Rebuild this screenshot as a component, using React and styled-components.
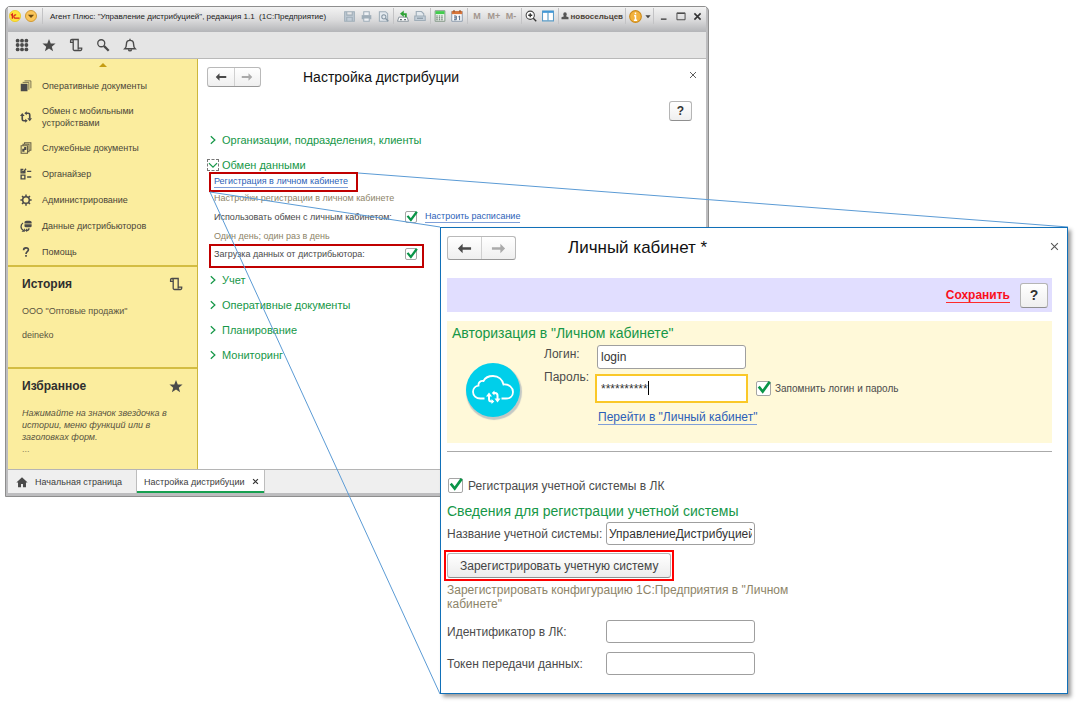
import React, { useLayoutEffect, useRef, useState } from 'react';
import styled, { createGlobalStyle } from 'styled-components';

const NAV_ITEMS = [
  { icon: 'docs', text: 'Оперативные документы' },
  { icon: 'sync', text: 'Обмен с мобильными устройствами', tall: true },
  { icon: 'service', text: 'Служебные документы' },
  { icon: 'organizer', text: 'Органайзер' },
  { icon: 'gear', text: 'Администрирование' },
  { icon: 'database', text: 'Данные дистрибьюторов' },
  { icon: 'help', text: 'Помощь' },
];

const CLOSED_GROUPS = ['Учет', 'Оперативные документы', 'Планирование', 'Мониторинг'];

const App = () => {
  const desktopRef = useRef(null);
  const frameRef = useRef(null);
  const dialogRef = useRef(null);
  const [lines, setLines] = useState([]);

  useLayoutEffect(() => {
    // the connectors run from the framed link to the corners of the dialog
    function measure() {
      const base = desktopRef.current.getBoundingClientRect();
      const from = frameRef.current.getBoundingClientRect();
      const to = dialogRef.current.getBoundingClientRect();
      const points = [
        [from.right, from.top + 1, to.right, to.top],
        [from.left + 1, from.bottom, to.left, to.top],
        [from.left + 1, from.bottom, to.left, to.bottom],
      ];
      setLines(points.map(([x1, y1, x2, y2]) => ({
        x1: x1 - base.left,
        y1: y1 - base.top,
        x2: x2 - base.left,
        y2: y2 - base.top,
      })));
    }
    measure();
    window.addEventListener('resize', measure);
    return () => window.removeEventListener('resize', measure);
  }, []);

  return (
    <Desktop ref={desktopRef}>
      <GlobalStyle />
      <MainWindow frameRef={frameRef} />
      <Connectors aria-hidden="true">
        {lines.map((line, index) => (
          <line key={index} {...line} stroke="#5b9bd5" />
        ))}
      </Connectors>
      <AccountDialog dialogRef={dialogRef} />
    </Desktop>
  );
};

const MainWindow = ({ frameRef }) => (
  <WindowFrame>
    <TitleBar>
      <Icon name="logo" size={12} />
      <RoundArrow type="button" aria-label="Главное меню">
        <Icon name="triangle" size={10} />
      </RoundArrow>
      <BarLine />
      <WindowTitle>Агент Плюс: "Управление дистрибуцией", редакция 1.1&nbsp; (1С:Предприятие)</WindowTitle>
      <TitleTools>
        <TitleButton aria-label="Сохранить"><Icon name="save" size={11} /></TitleButton>
        <TitleButton aria-label="Печать"><Icon name="print" size={11} /></TitleButton>
        <TitleButton aria-label="Просмотр"><Icon name="preview" size={11} /></TitleButton>
        <BarLine />
        <TitleButton aria-label="Получить ссылку"><Icon name="linkOut" size={12} /></TitleButton>
        <TitleButton aria-label="Перейти по ссылке"><Icon name="linkIn" size={12} /></TitleButton>
        <BarLine />
        <TitleButton aria-label="Калькулятор"><Icon name="calc" size={12} /></TitleButton>
        <TitleButton aria-label="Календарь"><Icon name="calendar" size={12} /></TitleButton>
        <BarLine />
        <TitleButton>M</TitleButton>
        <TitleButton>M+</TitleButton>
        <TitleButton>M-</TitleButton>
        <BarLine />
        <TitleButton aria-label="Масштаб"><Icon name="zoomIn" size={12} /></TitleButton>
        <TitleButton aria-label="Панели"><Icon name="panes" size={12} /></TitleButton>
        <BarLine />
        <User><Icon name="user" size={8} />новосельцев</User>
        <BarLine />
        <TitleButton aria-label="Информация"><Icon name="info" size={13} /></TitleButton>
        <TitleButton $narrow aria-label="Еще"><Icon name="caret" size={6} /></TitleButton>
        <BarLine />
        <TitleButton aria-label="Свернуть"><Icon name="minimize" size={10} /></TitleButton>
        <TitleButton aria-label="Развернуть"><Icon name="maximize" size={10} /></TitleButton>
        <TitleButton aria-label="Закрыть"><Icon name="closeBold" size={9} /></TitleButton>
      </TitleTools>
    </TitleBar>
    <Toolbar>
      <ToolButton aria-label="Меню функций"><Icon name="grid" size={14} /></ToolButton>
      <ToolButton aria-label="Избранное"><Icon name="star" size={14} /></ToolButton>
      <ToolButton aria-label="История"><Icon name="scroll" size={14} /></ToolButton>
      <ToolButton aria-label="Поиск"><Icon name="search" size={14} /></ToolButton>
      <ToolButton aria-label="Уведомления"><Icon name="bell" size={14} /></ToolButton>
    </Toolbar>
    <WindowBody>
      <Sidebar />
      <Content>
        <FormHeader>
          <HistoryButtons>
            <HistoryButton aria-label="Назад"><Icon name="back" size={12} /></HistoryButton>
            <HistoryButton aria-label="Вперед" disabled><Icon name="forward" size={12} /></HistoryButton>
          </HistoryButtons>
          <FormTitle>Настройка дистрибуции</FormTitle>
          <CloseButton aria-label="Закрыть"><Icon name="close" size={8} /></CloseButton>
        </FormHeader>
        <HelpRow>
          <HelpButton>?</HelpButton>
        </HelpRow>
        <Group title="Организации, подразделения, клиенты" />
        <Group title="Обмен данными" open>
          <LinkFrame ref={frameRef}>
            <Link href="#registration">Регистрация в личном кабинете</Link>
          </LinkFrame>
          <Hint>Настройки регистрации в личном кабинете</Hint>
          <OptionRow>
            <label htmlFor="use-exchange">Использовать обмен с личным кабинетом:</label>
            <CheckBox id="use-exchange" />
            <Link href="#schedule">Настроить расписание</Link>
          </OptionRow>
          <Hint $spaced>Один день; один раз в день</Hint>
          <OptionFrame>
            <label htmlFor="load-data">Загрузка данных от дистрибьютора:</label>
            <CheckBox id="load-data" />
          </OptionFrame>
        </Group>
        {CLOSED_GROUPS.map(title => (
          <Group key={title} title={title} />
        ))}
      </Content>
    </WindowBody>
    <TabBar>
      <Tab><Icon name="home" size={12} />Начальная страница</Tab>
      <Tab $active><span>Настройка дистрибуции</span><Icon name="closeBold" size={7} /></Tab>
    </TabBar>
  </WindowFrame>
);

const Sidebar = () => (
  <SidebarWrapper>
    <ScrollUp><Icon name="up" size={8} /></ScrollUp>
    <nav>
      {NAV_ITEMS.map(item => (
        <NavItem key={item.text} href="#menu" $tall={item.tall}>
          <Icon name={item.icon} size={12} />
          <span>{item.text}</span>
        </NavItem>
      ))}
    </nav>
    <SideSection>
      <SideHeading>История<Icon name="scroll" size={14} /></SideHeading>
      <SideText>ООО "Оптовые продажи"</SideText>
      <SideText>deineko</SideText>
    </SideSection>
    <SideSection>
      <SideHeading>Избранное<Icon name="star" size={14} /></SideHeading>
      <SideNote>Нажимайте на значок звездочка в истории, меню функций или в заголовках форм.</SideNote>
      <SideDots>...</SideDots>
    </SideSection>
  </SidebarWrapper>
);

const Group = ({ title, open, children }) => (
  <GroupWrapper $open={open}>
    <GroupHeader type="button" aria-expanded={!!open}>
      <Chevron $open={open}><Icon name={open ? 'chevronDown' : 'chevronRight'} size={10} /></Chevron>
      {title}
    </GroupHeader>
    {children}
  </GroupWrapper>
);

const CheckBox = ({ id, large }) => (
  <CheckWrapper $large={large}>
    <input type="checkbox" id={id} defaultChecked />
    <Icon name="tick" size={large ? 14 : 12} />
  </CheckWrapper>
);

const AccountDialog = ({ dialogRef }) => (
  <Dialog ref={dialogRef} role="dialog" aria-labelledby="dialog-title">
    <DialogHeader>
      <HistoryButtons $large>
        <HistoryButton aria-label="Назад"><Icon name="back" size={15} /></HistoryButton>
        <HistoryButton aria-label="Вперед" disabled><Icon name="forward" size={15} /></HistoryButton>
      </HistoryButtons>
      <DialogTitle id="dialog-title">Личный кабинет *</DialogTitle>
      <CloseButton aria-label="Закрыть"><Icon name="close" size={9} /></CloseButton>
    </DialogHeader>
    <CommandBar>
      <SaveLink href="#save">Сохранить</SaveLink>
      <HelpButton $large>?</HelpButton>
    </CommandBar>
    <AuthPanel>
      <SectionTitle>Авторизация в "Личном кабинете"</SectionTitle>
      <AuthBody>
        <CloudBadge><Icon name="cloud" size={54} /></CloudBadge>
        <AuthLabels>
          <label htmlFor="login">Логин:</label>
          <label htmlFor="password">Пароль:</label>
        </AuthLabels>
        <AuthFields>
          <LoginInput id="login" defaultValue="login" />
          <PasswordRow>
            <PasswordBox>
              <input id="password" defaultValue="**********" />
              <Caret />
            </PasswordBox>
            <CheckBox id="remember" large />
            <label htmlFor="remember">Запомнить логин и пароль</label>
          </PasswordRow>
          <AccountLink href="#account">Перейти в "Личный кабинет"</AccountLink>
        </AuthFields>
      </AuthBody>
    </AuthPanel>
    <Divider />
    <RegisterRow>
      <CheckBox id="register" large />
      <label htmlFor="register">Регистрация учетной системы в ЛК</label>
    </RegisterRow>
    <SectionTitle>Сведения для регистрации учетной системы</SectionTitle>
    <FieldRow>
      <label htmlFor="system-name">Название учетной системы:</label>
      <TextInput id="system-name" defaultValue="УправлениеДистрибуцией" />
    </FieldRow>
    <RegisterFrame>
      <RegisterButton type="button">Зарегистрировать учетную систему</RegisterButton>
    </RegisterFrame>
    <DialogHint>Зарегистрировать конфигурацию 1С:Предприятия в "Личном кабинете"</DialogHint>
    <FieldRow $spaced>
      <label htmlFor="account-id">Идентификатор в ЛК:</label>
      <TextInput id="account-id" />
    </FieldRow>
    <FieldRow $spaced>
      <label htmlFor="token">Токен передачи данных:</label>
      <TextInput id="token" />
    </FieldRow>
  </Dialog>
);

const DARK = '#4a4a4a';
const PALE = '#9fadb8';

// every icon is drawn on a 16x16 grid, the cloud is on 54x54
const ICONS = {
  logo: <>
    <circle cx="8" cy="8" r="7.500" fill="#ffe23a" stroke="#e9c51b" strokeWidth="1" />
    <path d="M2.500 7l2-1.500v6M9.500 6.800a2.100 2.100 0 1 0-.5 3.900h5" fill="none" stroke="#d8281e" strokeWidth="1.700" />
  </>,
  triangle: <path d="M3 6h10l-5 5z" fill="#6b4a12" />,
  caret: <path d="M1 6h14l-7 8z" fill="#444" />,
  up: <path d="M0 12h16L8 4z" fill="#c59d13" />,
  save: <path d="M1 1h14v14H1zM4 1v5h8V1M4 15v-6h8v6" fill="#c3ced8" stroke={PALE} strokeWidth="1.600" />,
  print: <>
    <path d="M4 6V1h8v5" fill="#eef1f4" stroke={PALE} strokeWidth="1.500" />
    <path d="M1 6h14v6H1z" fill={PALE} />
    <path d="M4 10h8v5H4z" fill="#eef1f4" stroke={PALE} strokeWidth="1.500" />
  </>,
  preview: <>
    <path d="M2 1h9l3 3v11H2z" fill="#e3e9ee" stroke={PALE} strokeWidth="1.500" />
    <circle cx="8.500" cy="8.500" r="3" fill="none" stroke="#8595a2" strokeWidth="1.500" />
    <path d="M11 11l4 4" stroke="#8595a2" strokeWidth="2" />
  </>,
  linkOut: <>
    <path d="M2.500 9.500h11l1.800 5.500H.7z" fill="#fff" stroke="#8a949c" strokeWidth="1.300" />
    <path d="M4 12.800h2.500M9.500 12.800H12" stroke="#5c6770" strokeWidth="1.800" />
    <path d="M13 9.500V4.200H9V.8L4 5l5 4.200V6.500h1.500v3z" fill="#2fa336" />
  </>,
  linkIn: <>
    <path d="M3 8V2h7l3 3v3" fill="#e3e9ee" stroke={PALE} strokeWidth="1.500" />
    <path d="M1 8h14v6H1z" fill="#c3ced8" stroke={PALE} strokeWidth="1.400" />
    <path d="M4 11h8" stroke="#8595a2" strokeWidth="1.500" />
  </>,
  calc: <>
    <path d="M1.500 1h13v14h-13z" fill="#f4f7f4" stroke="#7f9484" strokeWidth="1.300" />
    <path d="M2 1.500h12v4H2z" fill="#43cd4d" />
    <path d="M3 8h10M3 10.500h10M3 13h10" stroke="#56705c" strokeWidth="1.400" strokeDasharray="2 1.300" />
  </>,
  calendar: <>
    <path d="M1 2h14v13H1z" fill="#f8fafc" stroke="#8a99ab" strokeWidth="1.300" />
    <path d="M1 1.500h14v4H1z" fill="#d9753a" />
    <path d="M4 0v3M12 0v3" stroke="#8d4a22" strokeWidth="1.500" />
    <path d="M4 8h3v5H4M4 10.500h3M10 9l1.500-1v5.500" fill="none" stroke="#4a6282" strokeWidth="1.300" />
  </>,
  zoomIn: <>
    <circle cx="7" cy="7" r="5.500" fill="#fff" stroke="#444" strokeWidth="1.400" />
    <path d="M4.300 7h5.400M7 4.300v5.400M11 11l4 4" stroke="#333" strokeWidth="1.800" />
  </>,
  panes: <>
    <path d="M.7 1.500h14.600v13H.7z" fill="#fff" stroke="#5a9bc6" strokeWidth="1.400" />
    <path d="M1 2.500h14" stroke="#3f97d8" strokeWidth="2.600" />
    <path d="M8 2v12" stroke="#5a9bc6" strokeWidth="1.500" />
  </>,
  user: <path d="M4.500 4.500a3.500 4 0 1 1 7 0c0 2-1 3-1.500 4l5 2v4H1v-4l5-2c-.5-1-1.500-2-1.500-4z" fill="#555" />,
  info: <>
    <circle cx="8" cy="8" r="7.200" fill="#f3b23d" stroke="#cb8a1c" strokeWidth="1.300" />
    <path d="M8 3v2.200M8 6.500v6M6.300 7h2M6 12.500h4" stroke="#fff" strokeWidth="1.800" />
  </>,
  minimize: <path d="M3 13h9" stroke="#333" strokeWidth="2" />,
  maximize: <path d="M1.500 3h13v11h-13zM2 4h12" fill="none" stroke="#444" strokeWidth="1.500" />,
  closeBold: <path d="M2.500 2.500l11 11M13.500 2.500l-11 11" stroke="#333" strokeWidth="2.800" />,
  close: <path d="M2 2l12 12M14 2L2 14" stroke="#555" strokeWidth="1.900" />,
  grid: [3, 8, 13].map(y => [3, 8, 13].map(x => (
    <circle key={`${x}-${y}`} cx={x} cy={y} r="2.200" fill={DARK} />
  ))),
  star: <path d="M8 1l2 5.200 5.500.2-4.300 3.500 1.500 5.300L8 12.100l-4.700 3.100 1.500-5.300L.5 6.400 6 6.200z" fill={DARK} />,
  scroll: <path d="M4.800 5H1.800V3.200A1.500 1.500 0 0 1 3.300 1.700H10.500V11.500H14.500V12.700A1.500 1.500 0 0 1 13 14.300H6.300A1.500 1.500 0 0 1 4.800 12.800V3.200A1.500 1.500 0 0 0 3.300 1.700M10.500 11.500V13" fill="none" stroke={DARK} strokeWidth="1.500" />,
  search: <>
    <circle cx="6" cy="6" r="4" fill="none" stroke={DARK} strokeWidth="1.500" />
    <path d="M9 9l5.500 5.500" stroke={DARK} strokeWidth="2.600" />
  </>,
  bell: <path d="M2 12.300h12c-1.300-1.300-1.900-2.300-1.900-5.300 0-2.500-1.500-4.300-4.100-4.300S3.900 4.500 3.900 7c0 3-.6 4-1.900 5.300zM8 2.700V.8M6.300 13.200c.3 2 3.100 2 3.400 0" fill="none" stroke={DARK} strokeWidth="1.600" />,
  back: <path d="M1 8l5-5v3.700h9v2.600H6V13z" fill={DARK} />,
  forward: <path d="M15 8l-5-5v3.700H1v2.600h9V13z" fill="#aaa" />,
  docs: <>
    <path d="M1 5h9v10H1z" fill={DARK} />
    <path d="M3.500 3.200h8.300V13M6 1.200h8.500V11" fill="none" stroke="#77704f" strokeWidth="1.300" />
  </>,
  sync: <>
    <path d="M8 3h3A2 2 0 0 1 13 5v5M8 13H5A2 2 0 0 1 3 11V6" fill="none" stroke={DARK} strokeWidth="2.200" />
    <path d="M9.800 9.500h6.200L13 13.500zM0 6.500h6.200L3 2.500zM9 .2v5.600L5.800 3zM7 15.800v-5.600L10.200 13z" fill={DARK} />
  </>,
  service: <>
    <path d="M1.500 5h8.500v10H1.500zM4 5V3h8v10h-2M6 3V1h8.500v10H12" fill="none" stroke="#655f47" strokeWidth="1.400" />
    <path d="M3 9h3v4H3zM5.500 6.500h3v4h-3z" fill={DARK} />
  </>,
  organizer: <path d="M1.500 9.500h5V14.500h-5zM6.500 4v2.500h-5V2h3M3 4l1.500 1.500L8 1M9.500 4.500H15M9.500 12H15" fill="none" stroke={DARK} strokeWidth="1.800" />,
  gear: <>
    <circle cx="8" cy="8" r="4.400" fill="none" stroke={DARK} strokeWidth="2" />
    <path d="M8 .5v3M8 12.500v3M.5 8h3M12.500 8h3M2.700 2.700l2 2M11.300 11.300l2 2M13.300 2.700l-2 2M4.700 11.300l-2 2" stroke={DARK} strokeWidth="2" />
  </>,
  database: <>
    <path d="M6 2.500C6 .5 15.500.5 15.500 2.500V4.500H6zM6 5.500h9.500V8.500c0 1.500-9.500 1.500-9.500 0z" fill={DARK} />
    <path d="M4 4C0 6.500 1 12 4 13.500M12 11c0 2-1.500 3-3.500 3" fill="none" stroke={DARK} strokeWidth="1.800" />
    <path d="M2 15.500h4.500V11zM9.500 11v5L6.500 14z" fill={DARK} />
  </>,
  help: <>
    <path d="M4.800 5.500c0-4 6.400-4 6.400-.5C11.200 7.500 8 7.500 8 10.500" fill="none" stroke={DARK} strokeWidth="2.200" />
    <path d="M6.900 12h2.200v2.300H6.900z" fill={DARK} />
  </>,
  home: <path d="M8 1.500L.5 8.500h2.200V15h4v-4.500h2.600V15h4V8.500h2.200z" fill={DARK} />,
  chevronRight: <path d="M4.500 2l6.500 6-6.500 6" fill="none" stroke="#169748" strokeWidth="2" />,
  chevronDown: <path d="M1.500 5L8 11.500 14.500 5" fill="none" stroke="#169748" strokeWidth="2" />,
  tick: <path d="M2 6.500l4.500 5.500L14.500 1" fill="none" stroke="#0a9548" strokeWidth="3" />,
};

const Icon = ({ name, size }) => {
  if (name === 'cloud') {
    return (
      <svg width={size} height={size} viewBox="0 0 54 54" aria-hidden="true">
        <path d="M18.500 35.500H14.500C10 35.500 7 32.500 7 28.800C7 25.500 9.500 23 12.500 22.600C12 19.500 14.500 17.500 17.500 18C19 15 22.500 13 27 13C32.500 13 36.500 16.500 37.500 21.500C43 21 47 24.500 47 29C47 33 44 35.500 40 35.500H35.500" fill="none" stroke="#fff" strokeWidth="1.800" />
        <path d="M27 38.500H25.500A2.500 2.500 0 0 1 23 36V33M27.500 30H29A2.500 2.500 0 0 1 31.500 32.500V36" fill="none" stroke="#fff" strokeWidth="2" />
        <path d="M20 33.500h6l-3-4zM28.500 35.500h6l-3 4zM25.500 36v5l2.800-2.500zM28.500 27.500v5L25.800 30z" fill="#fff" />
      </svg>
    );
  }
  return (
    <svg width={size} height={size} viewBox="0 0 16 16" aria-hidden="true">
      {ICONS[name]}
    </svg>
  );
};

const GlobalStyle = createGlobalStyle`
  * {
    box-sizing: border-box;
  }

  body {
    margin: 0;
    background: #fff;
    font-family: 'Liberation Sans', Arial, sans-serif;
  }

  button, input {
    font-family: inherit;
  }

  button {
    padding: 0;
  }

  svg {
    display: block;
    flex: none;
  }
`;

const Desktop = styled.main`
  position: relative;
  min-height: 100vh;
  overflow: hidden;
`;

const Connectors = styled.svg`
  position: absolute;
  top: 0;
  left: 0;
  width: 100%;
  height: 100%;
  pointer-events: none;
`;

const WindowFrame = styled.section`
  position: absolute;
  top: 6px;
  left: 5px;
  right: 370px;
  border: 1px solid #8e8e8e;
  border-radius: 5px 5px 0 0;
  padding: 0 2px 3px;
  background: #bdbdbf;
`;

const TitleBar = styled.header`
  display: flex;
  align-items: center;
  gap: 4px;
  height: 25px;
  padding: 0 0 7px 1px;
  background: linear-gradient(#f3f3f3, #dcdcdd 50%, #b4b5b8);
`;

const RoundArrow = styled.button`
  display: flex;
  align-items: center;
  justify-content: center;
  width: 12px;
  height: 12px;
  border: 1px solid #cf9a35;
  border-radius: 50%;
  background: #fbc65a;
`;

const WindowTitle = styled.span`
  flex: 1;
  margin-left: 2px;
  white-space: nowrap;
  font-size: 8px;
  color: #1c1c1c;
`;

const BarLine = styled.i`
  width: 1px;
  height: 16px;
  margin: 0 1px;
  background: #c3c3c5;
`;

const TitleTools = styled.div`
  display: flex;
  align-items: center;
`;

const TitleButton = styled.button`
  display: flex;
  align-items: center;
  justify-content: center;
  width: ${props => props.$narrow ? '8px' : '17px'};
  height: 16px;
  border: 0;
  background: none;
  color: #a3978f;
  font-size: 9px;
  font-weight: 700;
`;

const User = styled.span`
  display: flex;
  align-items: center;
  gap: 2px;
  padding: 0 1px;
  font-size: 8px;
  font-weight: 700;
  color: #4c4337;
`;

const Toolbar = styled.div`
  display: flex;
  align-items: center;
  gap: 13px;
  height: 27px;
  padding-left: 7px;
  border-bottom: 1px solid #b9b9b9;
  background: #e5e5e5;
`;

const ToolButton = styled.button`
  border: 0;
  background: none;
`;

const WindowBody = styled.div`
  display: flex;
  background: #fff;
`;

const SidebarWrapper = styled.aside`
  flex: none;
  width: 190px;
  border-right: 1px solid #cdb73c;
  background: #fbed9e;
`;

const ScrollUp = styled.div`
  display: flex;
  justify-content: center;
  height: 14px;
  padding-top: 2px;
`;

const NavItem = styled.a`
  display: flex;
  align-items: center;
  gap: 10px;
  height: ${props => props.$tall ? '36px' : '26px'};
  padding: 0 36px 0 12px;
  color: #4a4538;
  font-size: 9px;
  line-height: 12px;
  text-decoration: none;
`;

const SideSection = styled.section`
  height: 102px;
  padding: 9px 14px 0;
  border-top: 2px solid #d3bd42;
`;

const SideHeading = styled.h2`
  display: flex;
  align-items: center;
  justify-content: space-between;
  margin: 0 0 13px;
  font-size: 12px;
  line-height: 16px;
  color: #2f2f2f;
`;

const SideText = styled.p`
  margin: 0 0 12px;
  font-size: 9px;
  line-height: 12px;
  color: #59543f;
`;

const SideNote = styled(SideText)`
  margin: 0;
  font-style: italic;
`;

const SideDots = styled(SideText)`
  margin: 0;
  color: #8a815b;
`;

const Content = styled.div`
  flex: 1;
  min-width: 0;
  padding: 8px 9px 0;
`;

const FormHeader = styled.header`
  display: flex;
  align-items: center;
  height: 20px;
`;

const HistoryButtons = styled.div`
  display: flex;
  flex: none;
  width: ${props => props.$large ? '69px' : '54px'};
  height: ${props => props.$large ? '24px' : '20px'};
  border: 1px solid #b9b9b9;
  border-bottom-color: #989898;
  border-radius: 3px;
  background: linear-gradient(#fff, #efefef);
`;

const HistoryButton = styled.button`
  display: flex;
  flex: 1;
  align-items: center;
  justify-content: center;
  border: 0;
  background: none;

  & + & {
    border-left: 1px solid #d0d0d0;
  }
`;

const FormTitle = styled.h1`
  flex: 1;
  margin: 0 0 0 42px;
  font-size: 14px;
  font-weight: 400;
  color: #111;
`;

const CloseButton = styled.button`
  display: flex;
  align-items: center;
  justify-content: center;
  width: 16px;
  height: 16px;
  margin: 0 -4px 4px 0;
  border: 0;
  background: none;
`;

const HelpRow = styled.div`
  display: flex;
  justify-content: flex-end;
  padding: 14px 5px 12px 0;
`;

const HelpButton = styled.button`
  width: ${props => props.$large ? '28px' : '23px'};
  height: ${props => props.$large ? '25px' : '20px'};
  border: 1px solid #b5b5b5;
  border-bottom-color: #8f8f8f;
  border-radius: 3px;
  background: linear-gradient(#fff, #efefef);
  color: #333;
  font-size: ${props => props.$large ? '14px' : '12px'};
  font-weight: 700;
`;

const GroupWrapper = styled.section`
  margin-bottom: ${props => props.$open ? '5px' : '11px'};
`;

const GroupHeader = styled.button`
  display: flex;
  align-items: center;
  gap: 3px;
  height: 14px;
  border: 0;
  background: none;
  color: #169748;
  font-size: 11px;
  line-height: 14px;
`;

const Chevron = styled.span`
  padding: 0;
  border: 1px ${props => props.$open ? 'dashed #777' : 'solid transparent'};
`;

const Link = styled.a`
  border-bottom: 1px solid #7f9fd8;
  color: #2d5fb8;
  font-size: 9px;
  line-height: 11px;
  text-decoration: none;
`;

const LinkFrame = styled.div`
  display: flex;
  align-items: center;
  width: fit-content;
  height: 20px;
  margin-left: 2px;
  padding: 0 8px 0 3px;
  border: 2px solid #c00000;
`;

const Hint = styled.p`
  margin: ${props => props.$spaced ? '6px' : '0'} 0 0 7px;
  color: #8d8468;
  font-size: 9px;
  line-height: 12px;
`;

const OptionRow = styled.div`
  display: grid;
  grid-template-columns: 191px 20px max-content;
  align-items: center;
  height: 14px;
  margin: 6px 0 0 7px;
  color: #4b4b4b;
  font-size: 9px;
`;

const OptionFrame = styled(OptionRow)`
  width: fit-content;
  height: 24px;
  margin: 2px 0 0 2px;
  grid-template-columns: 191px 15px;
  padding: 0 2px 4px 3px;
  border: 2px solid #c00000;
`;

const CheckWrapper = styled.span`
  position: relative;
  display: block;
  flex: none;
  width: ${props => props.$large ? '15px' : '12px'};
  height: ${props => props.$large ? '15px' : '12px'};

  input {
    display: block;
    appearance: none;
    width: 100%;
    height: 100%;
    margin: 0;
    border: 1px solid #a5a5a5;
    border-radius: 2px;
    background: #fff;
  }

  svg {
    position: absolute;
    top: 0;
    left: 1px;
    pointer-events: none;
  }

  input:not(:checked) + svg {
    display: none;
  }
`;

const TabBar = styled.footer`
  display: flex;
  height: 24px;
  border-top: 1px solid #b5b5b5;
  background: #efefef;
`;

const Tab = styled.button`
  display: flex;
  align-items: center;
  gap: 7px;
  height: 23px;
  padding: ${props => props.$active ? '0 5px 0 7px' : '0 14px 0 8px'};
  border: 0;
  border-right: 1px solid #bdbdbd;
  background: ${props => props.$active ? '#fff' : 'none'};
  box-shadow: ${props => props.$active ? 'inset 0 -2px #16a050' : 'none'};
  color: #3c3c3c;
  font-size: 9px;
`;

const Dialog = styled.section`
  position: absolute;
  top: 227px;
  left: 440px;
  right: 11px;
  padding: 8px 15px 18px 6px;
  border: 1px solid #1170b8;
  background: #fff;
  box-shadow: 3px 3px 4px rgba(0, 0, 0, 0.4);
  color: #4b4b4b;
  font-size: 12px;
`;

const DialogHeader = styled(FormHeader)`
  height: 24px;

  ${CloseButton} {
    margin-right: -10px;
  }
`;

const DialogTitle = styled.h2`
  flex: 1;
  margin: 0 0 0 52px;
  font-size: 17px;
  font-weight: 400;
  color: #111;
`;

const CommandBar = styled.div`
  display: flex;
  align-items: center;
  justify-content: flex-end;
  gap: 10px;
  height: 34px;
  margin-top: 18px;
  padding-right: 4px;
  background: #e1deff;
`;

const SaveLink = styled.a`
  border-bottom: 1px solid #ff2a2a;
  color: #fa0f1c;
  font-weight: 700;
  line-height: 14px;
  text-decoration: none;
`;

const AuthPanel = styled.div`
  height: 122px;
  margin-top: 9px;
  padding: 2px 5px 0;
  background: #fff9d9;
`;

const SectionTitle = styled.h3`
  margin: 0;
  color: #169748;
  font-size: 14px;
  font-weight: 400;
  line-height: 20px;
`;

const AuthBody = styled.div`
  display: flex;
`;

const CloudBadge = styled.div`
  width: 54px;
  height: 54px;
  margin: 20px 24px 0 14px;
  border-radius: 50%;
  background: #00cfea;
  box-shadow: 1px 2px 1px 1px #c4c8c4;
`;

const AuthLabels = styled.div`
  display: flex;
  flex-direction: column;
  width: 51px;
  line-height: 23px;
`;

const AuthFields = styled.div`
  display: flex;
  flex-direction: column;
  align-items: flex-start;
  gap: 5px;
  padding-top: 2px;
`;

const TextInput = styled.input`
  width: 149px;
  height: 23px;
  padding: 0 2px;
  border: 1px solid #9f9f9f;
  border-radius: 3px;
  background: #fff;
  color: #333;
  font-size: 12px;
`;

const LoginInput = styled(TextInput)`
  height: 24px;
  margin-left: 2px;
  padding: 0 3px;
`;

const PasswordRow = styled.div`
  display: flex;
  align-items: center;
  font-size: 10px;

  label {
    margin-left: 4px;
  }
`;

const PasswordBox = styled.span`
  position: relative;
  margin-right: 8px;

  input {
    display: block;
    width: 153px;
    height: 29px;
    padding: 0 4px;
    border: 2px solid #fac828;
    background: #fff;
    color: #333;
    font-size: 12px;
  }
`;

const Caret = styled.i`
  position: absolute;
  top: 7px;
  left: 53px;
  width: 1px;
  height: 14px;
  background: #000;
`;

const AccountLink = styled(Link)`
  margin: 2px 0 0 3px;
  font-size: 12px;
  line-height: 14px;
`;

const Divider = styled.hr`
  margin: 8px 0 26px;
  border: 0;
  border-top: 1px solid #aaa;
`;

const RegisterRow = styled.div`
  display: flex;
  align-items: center;
  gap: 5px;
  height: 15px;
  margin: 0 0 8px 1px;
`;

const FieldRow = styled.div`
  display: grid;
  grid-template-columns: 159px max-content;
  align-items: center;
  margin-top: ${props => props.$spaced ? '9px' : '1px'};
`;

const RegisterFrame = styled.div`
  width: fit-content;
  margin: 5px 0 2px -3px;
  padding: 1px;
  border: 2px solid #fe0000;
`;

const RegisterButton = styled.button`
  height: 25px;
  padding: 0 12px;
  border: 1px solid #b5b5b5;
  border-bottom-color: #8f8f8f;
  border-radius: 3px;
  background: linear-gradient(#fff, #ececec);
  color: #444;
  font-size: 12px;
`;

const DialogHint = styled.p`
  max-width: 350px;
  margin: 0;
  color: #8d8468;
  line-height: 14px;
`;

export default App;
